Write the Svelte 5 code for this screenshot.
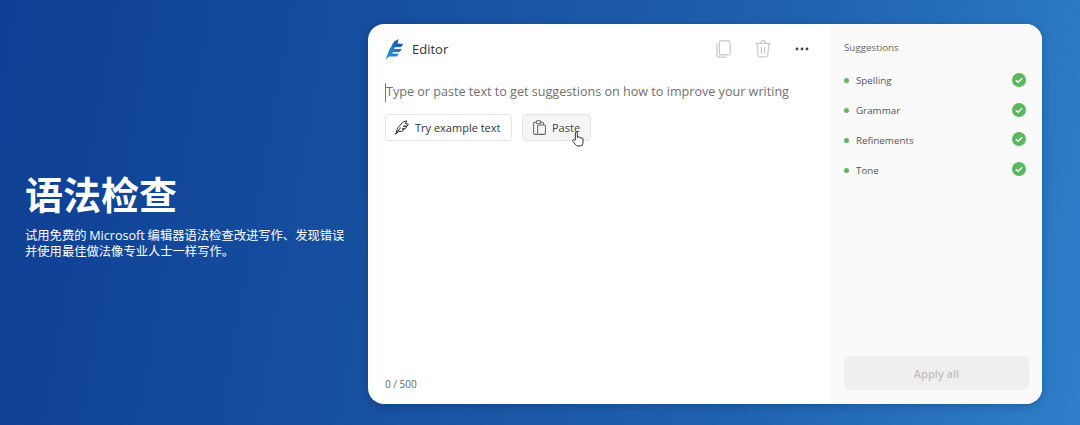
<script>
  const suggestions = ['Spelling', 'Grammar', 'Refinements', 'Tone'];
</script>

<main class="page">
  <section class="intro">
    <h1>语法检查</h1>
    <p>试用免费的 <span class="latin">Microsoft</span> 编辑器语法检查改进写作、发现错误<br />并使用最佳做法像专业人士一样写作。</p>
  </section>

  <section class="card">
    <div class="editor">
      <header class="head">
        <div class="brand">
          <svg width="19" height="21" viewBox="0 0 19 21">
            <defs>
              <linearGradient id="quill" x1="0" y1="1" x2="1" y2="0">
                <stop offset="0" stop-color="#2f9be0" />
                <stop offset="1" stop-color="#0f4fa0" />
              </linearGradient>
            </defs>
            <path d="M0.5 20.5 L4 11.5 L9 2.5 L13.5 0 L12.5 4.5 L18.5 5 L16 8 L9.8 8.2 L9 10 L17 10 L14.5 13 L7.8 13.2 L7.2 14.6 L14 14.8 L11.5 17.5 L4.5 17.5 Z" fill="url(#quill)" />
          </svg>
          <span>Editor</span>
        </div>
        <div class="tools">
          <svg class="copy" width="15" height="18" viewBox="0 0 15 18" fill="none" stroke="#c9c9c9" stroke-width="1.2">
            <rect x="3.4" y="0.8" width="10.8" height="14" rx="1.6" />
            <path d="M1 3.2 V14.5 a2.6 2.6 0 0 0 2.6 2.6 H10.5" />
          </svg>
          <svg class="trash" width="16" height="18" viewBox="0 0 16 18" fill="none" stroke="#c9c9c9" stroke-width="1.2">
            <path d="M0.5 3.4 H15.5 M5.4 3.2 a2.6 2.6 0 0 1 5.2 0 M2 3.6 L3.2 15 a2 2 0 0 0 2 1.8 H10.8 a2 2 0 0 0 2 -1.8 L14 3.6 M6.4 7 V13.4 M9.6 7 V13.4" />
          </svg>
          <svg class="more" width="14" height="4" viewBox="0 0 14 4" fill="#444">
            <circle cx="2" cy="2" r="1.4" />
            <circle cx="7" cy="2" r="1.4" />
            <circle cx="12" cy="2" r="1.4" />
          </svg>
        </div>
      </header>

      <div class="placeholder"><i class="caret"></i>Type or paste text to get suggestions on how to improve your writing</div>

      <div class="actions">
        <button class="try">
          <svg width="14" height="15" viewBox="0 0 14 15" fill="none" stroke="#333" stroke-width="1">
            <path d="M0.8 14.2 L2.6 8.2 L7.5 2.4 L11.5 0.8 L10.5 3.8 L13.4 4 L12 6 L8.4 6.2 L11.8 6.6 L10.4 8.6 L7 8.8 L9.2 9.2 L7.4 11.2 L3.4 11.6 Z M0.8 14.2 L5.6 7.6" />
          </svg>
          Try example text
        </button>
        <button class="paste">
          <svg width="13" height="15" viewBox="0 0 14 16" fill="none" stroke="#666" stroke-width="1.1">
            <path d="M4 2.4 H2 a1.4 1.4 0 0 0 -1.4 1.4 V14 a1.4 1.4 0 0 0 1.4 1.4 H5" />
            <path d="M8 2.4 H10 a1.4 1.4 0 0 1 1.4 1.4 V5" />
            <rect x="3.6" y="0.7" width="4.8" height="3.2" rx="1" />
            <rect x="5" y="5.4" width="8.4" height="10" rx="1.2" />
          </svg>
          Paste
          <svg class="cursor" width="12" height="16" viewBox="0 0 12 16" fill="#fff" stroke="#222" stroke-width="0.9">
            <path d="M3.4 9 V2 a1 1 0 0 1 2 0 V6.6 a1 1 0 0 1 2 0 V7 a1 1 0 0 1 1.8 0 V7.6 a1 1 0 0 1 1.8 0 V12 a3 3 0 0 1 -3 3 H6 a3 3 0 0 1 -2.4 -1.2 L0.8 10.2 a1 1 0 0 1 1.5 -1.3 Z" />
          </svg>
        </button>
      </div>

      <div class="count">0 / 500</div>
    </div>

    <aside class="side">
      <h2>Suggestions</h2>
      <ul>
        {#each suggestions as item}
          <li>
            <i class="dot"></i>
            <span>{item}</span>
            <svg width="14" height="14" viewBox="0 0 14 14">
              <circle cx="7" cy="7" r="7" fill="#5cb85f" />
              <path d="M3.8 7.2 L6 9.2 L10.2 5.2" fill="none" stroke="#fff" stroke-width="1.4" />
            </svg>
          </li>
        {/each}
      </ul>
      <button class="apply">Apply all</button>
    </aside>
  </section>
</main>

<style>
  :global(body) {
    margin: 0;
  }

  .page {
    width: 1080px;
    height: 425px;
    box-sizing: border-box;
    padding: 24px 38px 21px 25px;
    display: flex;
    align-items: stretch;
    justify-content: space-between;
    overflow: hidden;
    background: linear-gradient(100deg, #0e3f94 0%, #174f9f 35%, #1f62ae 70%, #2f7ec9 100%);
    font-family: "Open Sans", "Noto Sans CJK SC", sans-serif;
  }

  .intro {
    width: 330px;
    color: #fff;
    padding-top: 146px;
  }

  h1 {
    margin: 0;
    font: 700 38px/46px "Noto Sans CJK SC", sans-serif;
  }

  .intro p {
    margin: 11px 0 0;
    font: 400 12.3px/16px "Noto Sans CJK SC", sans-serif;
    white-space: nowrap;
  }

  .latin {
    font: 400 12.6px/1 "Open Sans", sans-serif;
  }

  .card {
    width: 674px;
    display: flex;
    background: #fff;
    border-radius: 16px;
    overflow: hidden;
    box-shadow: 0 2px 8px rgba(0, 0, 0, 0.2);
  }

  .editor {
    flex: 1;
    min-width: 0;
    display: flex;
    flex-direction: column;
    padding: 13px 17px 13px;
  }

  .head {
    display: flex;
    justify-content: space-between;
    align-items: center;
    height: 24px;
  }

  .brand {
    display: flex;
    align-items: center;
    gap: 8px;
    font-size: 13px;
    color: #333;
  }

  .tools {
    display: flex;
    align-items: center;
    padding-right: 4px;
  }

  .copy {
    margin-right: 24px;
  }

  .trash {
    margin-right: 24px;
  }

  .placeholder {
    margin-top: 21px;
    font-size: 12.6px;
    line-height: 20px;
    color: #6f6f6f;
    white-space: nowrap;
    display: flex;
    align-items: center;
  }

  .caret {
    width: 1px;
    height: 19px;
    background: #777;
  }

  .actions {
    display: flex;
    gap: 10px;
    margin-top: 12px;
  }

  .actions button {
    position: relative;
    height: 27px;
    display: flex;
    align-items: center;
    box-sizing: border-box;
    border: 1px solid #e3e3e3;
    border-radius: 4px;
    background: #fff;
    color: #333;
    font: 400 11px "Open Sans", sans-serif;
  }

  .try {
    width: 127px;
    gap: 6px;
    padding: 0 0 0 9px;
  }

  .actions .paste {
    width: 69px;
    gap: 6px;
    padding: 0 0 0 10px;
    background: #f5f5f5;
    color: #444;
  }

  .cursor {
    position: absolute;
    left: 49px;
    top: 16px;
  }

  .count {
    margin-top: auto;
    font-size: 10px;
    line-height: 14px;
    color: #666;
  }

  .side {
    width: 212px;
    flex: none;
    box-sizing: border-box;
    background: #fafafa;
    padding: 17px 13px 14px 14px;
    display: flex;
    flex-direction: column;
  }

  h2 {
    margin: 0;
    font-size: 9.8px;
    line-height: 14px;
    font-weight: 400;
    color: #666;
  }

  ul {
    list-style: none;
    margin: 11px 0 0;
    padding: 0 3px 0 0;
  }

  li {
    height: 29.8px;
    display: flex;
    align-items: center;
    font-size: 9.8px;
    color: #555;
  }

  li svg {
    margin-bottom: 2px;
  }

  .dot {
    width: 5px;
    height: 5px;
    border-radius: 50%;
    background: #5cb85f;
    margin-right: 7px;
  }

  li span {
    flex: 1;
  }

  .apply {
    margin-top: auto;
    height: 34px;
    border: 0;
    border-radius: 6px;
    background: #efefef;
    color: #c2bdbd;
    font: 600 11px "Open Sans", sans-serif;
  }
</style>
